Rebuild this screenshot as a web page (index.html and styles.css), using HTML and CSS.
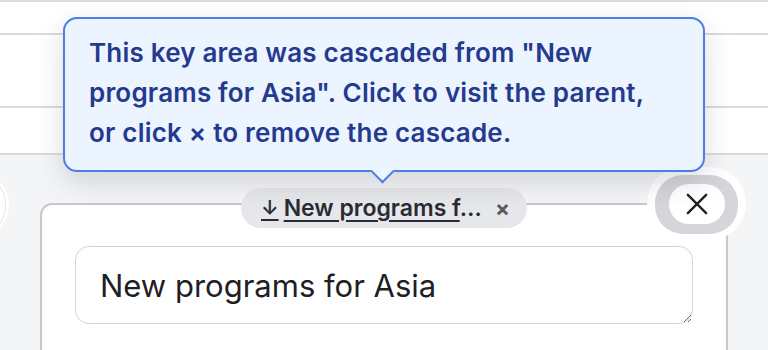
FILE: index.html
```html
<!DOCTYPE html>
<html>
<head>
<meta charset="utf-8">
<link rel="stylesheet" href="styles.css">
</head>
<body>
<div class="page">
  <div class="rows">
    <div class="row r1"></div>
    <div class="row r2"></div>
    <div class="row r3"></div>
  </div>
  <div class="stage">
    <div class="side-stub"></div>
    <div class="card">
      <div class="chip">
        <span class="chip-arrow">↓</span>
        <span class="chip-label"><span class="chip-text">New programs f</span>…</span>
        <span class="chip-x">×</span>
      </div>
      <div class="close-ring">
        <div class="close-gray">
          <button class="close-btn" aria-label="Close">
            <svg width="24" height="24" viewBox="0 0 24 24"><path d="M2 2 L22 22 M22 2 L2 22" stroke="#222" stroke-width="2.6" stroke-linecap="round" fill="none"/></svg>
          </button>
        </div>
      </div>
      <textarea class="field">New programs for Asia</textarea>
    </div>
  </div>
  <div class="tooltip">
    This key area was cascaded from "New<br>programs for Asia". Click to visit the parent,<br>or click × to remove the cascade.
    <span class="tip-arrow"></span>
  </div>
</div>
</body>
</html>
```
FILE: styles.css
```css
* { box-sizing: border-box; }
html, body { margin: 0; padding: 0; }
body {
  background: #f4f5f7;
  font-family: Inter, "Liberation Sans", sans-serif;
  width: 768px;
  height: 350px;
  overflow: hidden;
}
.page { position: relative; height: 350px; overflow: hidden; }
.rows {
  background: #ffffff;
  border-top: 2px solid #dcdcdc;
}
.row { border-bottom: 2px solid #d8dadf; }
.r1 { height: 33px; }
.r2 { height: 73px; }
.r3 { height: 47px; }

.stage {
  position: relative;
  padding: 48px 40px 0 40px;
}
.side-stub {
  position: absolute;
  left: -60px;
  top: 18px;
  width: 69px;
  height: 64px;
  border-radius: 30px;
  background: #ffffff;
  box-shadow: inset 0 0 0 3px #ffffff, inset 0 0 0 4px #e4e5e8;
}
.card {
  position: relative;
  width: 688px;
  height: 200px;
  background: #ffffff;
  border: 2px solid #c6c8cd;
  border-radius: 12px;
  padding: 41px 33px 0 33px;
}
.chip {
  position: absolute;
  left: 199px;
  top: -17px;
  height: 40px;
  width: 286px;
  border-radius: 20px;
  background: #e6e7ea;
  display: flex;
  align-items: center;
  padding: 0 0 0 20px;
  font-size: 23px;
  font-weight: 600;
  color: #2b2c33;
  white-space: nowrap;
}
.chip-arrow { font-size: 20px; text-decoration: underline; text-underline-offset: 4px; margin-right: 5px; }
.chip-text { text-decoration: underline; text-underline-offset: 4px; }
.chip-x { margin-left: auto; margin-right: 17px; color: #5a5b61; font-size: 22px; font-weight: 700; }

.close-ring {
  position: absolute;
  right: -20px;
  top: -38px;
  padding: 8px 8px 6px 8px;
  background: #ffffff;
  border-radius: 36px;
}
.close-gray {
  padding: 9px 13px 10px 14px;
  background: #d5d6d9;
  border-radius: 28px;
}
.close-btn {
  width: 56px;
  height: 40px;
  border: none;
  border-radius: 20px;
  background: #ffffff;
  display: flex;
  align-items: center;
  justify-content: center;
  padding: 0;
}
.close-btn svg { width: 22px; height: 22px; }

.field {
  display: block;
  width: 618px;
  height: 78px;
  border: 1.5px solid #cfd3dc;
  border-radius: 14px;
  padding: 20px 24px 0 24px;
  font-family: Inter, "Liberation Sans", sans-serif;
  font-size: 31px;
  color: #1f2024;
  background: #ffffff;
  resize: vertical;
  outline: none;
  overflow: hidden;
}

.tooltip {
  position: absolute;
  left: 63px;
  top: 17px;
  width: 642px;
  height: 155px;
  background: #ecf4ff;
  border: 2px solid #4c7fe6;
  border-radius: 14px;
  padding: 14px 10px 0 24px;
  color: #243a8e;
  font-size: 26px;
  font-weight: 600;
  letter-spacing: 0.2px;
  line-height: 40px;
  white-space: nowrap;
  box-shadow: 0 10px 28px rgba(30, 35, 50, 0.16);
  z-index: 10;
}
.tip-arrow {
  position: absolute;
  left: 309px;
  bottom: -10px;
  width: 17px;
  height: 17px;
  background: #ecf4ff;
  border-right: 2px solid #4c7fe6;
  border-bottom: 2px solid #4c7fe6;
  transform: rotate(45deg);
}
```
